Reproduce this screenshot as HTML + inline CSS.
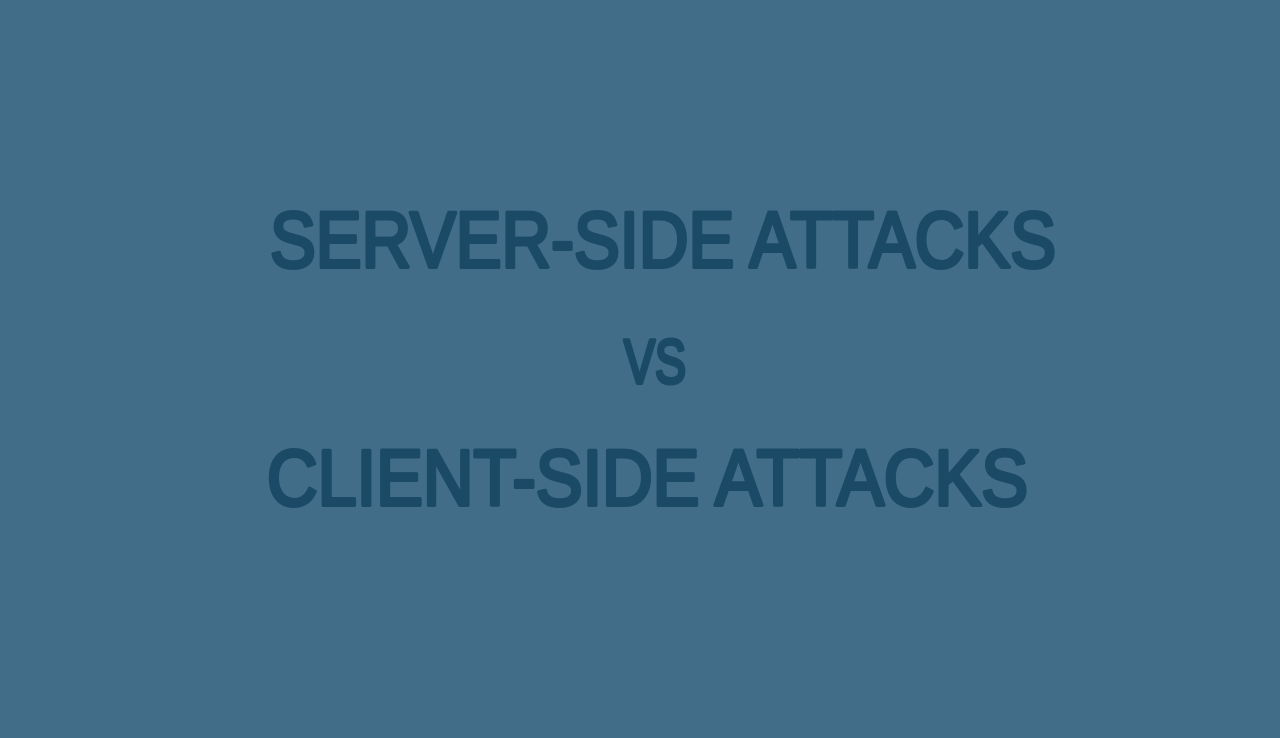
<!DOCTYPE html>
<html><head><style>
html,body{margin:0;padding:0;background:#416d88;width:1280px;height:738px;overflow:hidden}
svg{display:block}
text{font-family:"Liberation Sans",sans-serif;font-weight:normal;fill:#1b4a66;stroke:#1b4a66;stroke-width:4;stroke-linejoin:round}
</style></head><body>
<svg width="1280" height="738" viewBox="0 0 1280 738">
<text x="270" y="267" font-size="79" textLength="786" lengthAdjust="spacingAndGlyphs">SERVER-SIDE ATTACKS</text>
<text x="624" y="383" font-size="62" textLength="62" lengthAdjust="spacingAndGlyphs">VS</text>
<text x="267" y="505" font-size="79" textLength="761" lengthAdjust="spacingAndGlyphs">CLIENT-SIDE ATTACKS</text>
</svg>
</body></html>
